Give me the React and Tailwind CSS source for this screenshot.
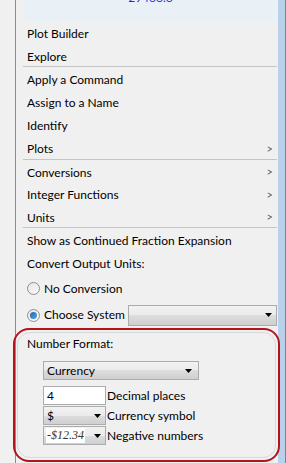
import React from 'react';

const font = { fontFamily: 'Lato, "Noto Sans", sans-serif', fontSize: '12px' };

function Sep() {
  return <div className="ml-[7px] mr-[1px] h-px bg-[#c5c5c5]" />;
}

function Item({ label, h = 'h-[23px]', arrow }) {
  return (
    <div className={`${h} flex items-center justify-between pl-[11px] pr-[5px] pt-[3px]`}>
      <span>{label}</span>
      {arrow && <span className="text-[#606060] text-[11px]">&gt;</span>}
    </div>
  );
}

function Radio({ checked }) {
  return (
    <span className="w-[13px] h-[13px] shrink-0 rounded-full border border-[#8e8f8f] bg-gradient-to-br from-[#e6e6e6] to-[#fafafa] flex items-center justify-center">
      {checked && (
        <span className="w-[7px] h-[7px] rounded-full bg-gradient-to-br from-[#1f5fa8] to-[#59a9e6]" />
      )}
    </span>
  );
}

function Combo({ className, children, arrowPad = 'pr-[6px]' }) {
  return (
    <div
      className={`${className} shrink-0 flex items-center justify-between border border-[#acacac] bg-[linear-gradient(#f2f2f2_0%,#ebebeb_50%,#dddddd_50%,#cfcfcf_100%)] pl-[2px] ${arrowPad}`}
    >
      <div className="flex items-center">{children}</div>
      <svg width="7" height="4" viewBox="0 0 7 4">
        <path d="M0 0H7L3.5 4Z" fill="#000" />
      </svg>
    </div>
  );
}

export default function App() {
  return (
    <div className="w-[286px] h-[463px] overflow-hidden bg-[#f0f0f0] text-black relative" style={font}>
      <div className="flex h-full">
        <div className="w-[15px] shrink-0" />
        <div className="w-px shrink-0 bg-[#8c8c8c]" />
        <div className="flex-1 flex flex-col">
          <div className="ml-[7px] h-[21px] bg-[#e9f1f6] overflow-hidden flex justify-center">
            <span className="text-[#2a2ad0] mt-[-10px] leading-[16px]">29466.6</span>
          </div>
          <Item label="Plot Builder" h="h-[23px]" />
          <Item label="Explore" h="h-[22px]" />
          <Sep />
          <Item label="Apply a Command" />
          <Item label="Assign to a Name" />
          <Item label="Identify" />
          <Item label="Plots" arrow />
          <Sep />
          <Item label="Conversions" h="h-[22px]" arrow />
          <Item label="Integer Functions" arrow />
          <Item label="Units" h="h-[22px]" arrow />
          <Sep />
          <Item label="Show as Continued Fraction Expansion" />
          <Item label="Convert Output Units:" />
          <div className="h-[27px] flex items-center pl-[11px] gap-[4px] pt-[2px]">
            <Radio />
            <span>No Conversion</span>
          </div>
          <div className="h-[28px] flex items-center pl-[11px]">
            <Radio checked />
            <span className="ml-[4px] w-[84px] whitespace-nowrap">Choose System</span>
            <Combo className="w-[149px] h-[21px]" arrowPad="pr-[4px]" />
          </div>
          <div className="pl-[11px] pt-[5px]">
            <div className="h-[17px] flex items-center pt-[2px]">Number Format:</div>
            <div className="pl-[16px] pt-[10px] flex flex-col">
              <Combo className="w-[156px] h-[19px]">
                <span className="pl-[1px]">Currency</span>
              </Combo>
              <div className="mt-[6px] flex flex-col gap-[1px]">
                <div className="flex items-center h-[19px]">
                  <div className="w-[63px] h-[19px] bg-white border border-[#abadb3] flex items-center pl-[3px]">4</div>
                  <span className="ml-[1px]">Decimal places</span>
                </div>
                <div className="flex items-center h-[19px]">
                  <Combo className="w-[63px] h-[19px]" arrowPad="pr-[4px]">
                    <span className="pl-[1px]">$</span>
                  </Combo>
                  <span className="ml-[1px]">Currency symbol</span>
                </div>
                <div className="flex items-center h-[19px]">
                  <Combo className="w-[63px] h-[19px]" arrowPad="pr-[4px]">
                    <span
                      className="bg-white italic px-[1px] text-[#333] text-[12px] leading-[15px]"
                      style={{ fontFamily: '"Liberation Serif", serif' }}
                    >
                      -$12.34
                    </span>
                  </Combo>
                  <span className="ml-[1px]">Negative numbers</span>
                </div>
              </div>
            </div>
          </div>
        </div>
        <div className="w-[7px] shrink-0 bg-[#b9d1ea]" />
        <div className="w-px shrink-0 bg-[#6b87a6]" />
      </div>
      {/* red annotation over the number format group */}
      <div className="absolute left-[13px] top-[328px] w-[267px] h-[134px] rounded-[16px] border-2 border-[#b3141c] pointer-events-none">
        <div className="absolute inset-[2px] rounded-[13px] border border-[#d9d9d9]" />
      </div>
    </div>
  );
}
